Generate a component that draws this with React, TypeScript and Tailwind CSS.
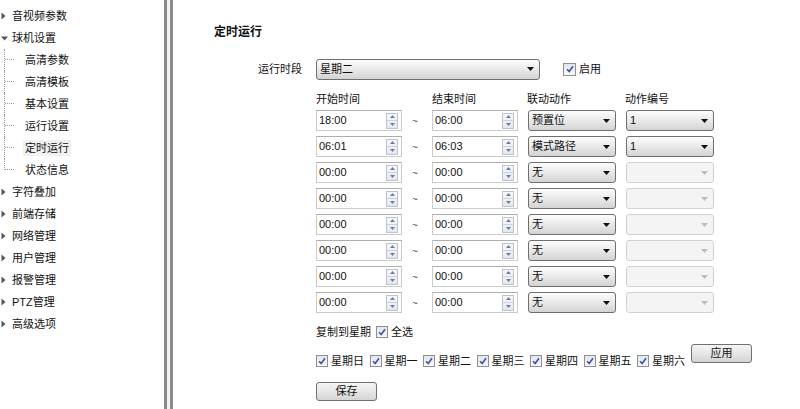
import React from "react";

const FONT = { fontFamily: '"Liberation Sans", "Noto Sans CJK SC", sans-serif' };

function TriRight() {
  return (
    <svg width="5" height="8" viewBox="0 0 5 8" className="shrink-0">
      <path d="M0.5 0.5 L4.5 4 L0.5 7.5 Z" fill="#555" />
    </svg>
  );
}
function TriDown() {
  return (
    <svg width="7" height="5" viewBox="0 0 7 5" className="shrink-0">
      <path d="M0 0.5 L7 0.5 L3.5 4.5 Z" fill="#555" />
    </svg>
  );
}

function TopItem({ label, open }: { label: string; open?: boolean }) {
  return (
    <div className="flex h-[22px] items-center pl-[1px]">
      <div className="flex w-[11px] items-center">{open ? <TriDown /> : <TriRight />}</div>
      <span className="text-[11px] text-[#111]">{label}</span>
    </div>
  );
}

function SubItem({ label, last, selected }: { label: string; last?: boolean; selected?: boolean }) {
  return (
    <div className="flex h-[22px] items-stretch pl-[4px]">
      {last ? (
        <div className="h-[11px] w-[10px] border-b border-l border-dotted border-[#9a9a9a]" />
      ) : (
        <div className="h-full w-[10px] border-l border-dotted border-[#9a9a9a]">
          <div className="h-[11px] w-full border-b border-dotted border-[#9a9a9a]" />
        </div>
      )}
      <div className="ml-[9px] flex items-center">
        <span className={`px-[2px] text-[11px] text-[#111] ${selected ? "bg-[#f1f1f1]" : ""}`}>{label}</span>
      </div>
    </div>
  );
}

function Arrow({ color }: { color: string }) {
  return (
    <svg width="7" height="4" viewBox="0 0 7 4" className="shrink-0">
      <path d="M0 0 L7 0 L3.5 4 Z" fill={color} />
    </svg>
  );
}

function Select({ text, width, disabled }: { text: string; width: string; disabled?: boolean }) {
  return (
    <div
      className={`flex h-[21px] items-center justify-between rounded-[3px] border pl-[3px] pr-[5px] ${width} ${
        disabled
          ? "border-[#d2d2d2] bg-[#f4f4f4]"
          : "border-[#6f6f6f] bg-gradient-to-b from-[#fdfdfd] via-[#e9e9e9] to-[#d3d3d3]"
      }`}
    >
      <span className="text-[11px] leading-none text-[#111]">{text}</span>
      <Arrow color={disabled ? "#bdbdbd" : "#111"} />
    </div>
  );
}

function Spin() {
  return (
    <div className="flex h-[16px] w-[12px] flex-col border border-[#bcc3cd] bg-gradient-to-b from-[#f7f8fa] to-[#e4e8ee]">
      <div className="flex flex-1 items-center justify-center border-b border-[#cdd3db]">
        <svg width="5" height="3" viewBox="0 0 5 3">
          <path d="M0 3 L5 3 L2.5 0 Z" fill="#6b7d9e" />
        </svg>
      </div>
      <div className="flex flex-1 items-center justify-center">
        <svg width="5" height="3" viewBox="0 0 5 3">
          <path d="M0 0 L5 0 L2.5 3 Z" fill="#6b7d9e" />
        </svg>
      </div>
    </div>
  );
}

function TimeInput({ value }: { value: string }) {
  return (
    <div className="flex h-[21px] w-[86px] items-center justify-between border border-[#cbcbcb] border-t-[#aeaeae] bg-white pl-[2px] pr-[3px]">
      <span className="text-[11px] leading-none text-[#111]">{value}</span>
      <Spin />
    </div>
  );
}

function Check({ size }: { size: string }) {
  return (
    <div className={`flex shrink-0 items-center justify-center border border-[#8e8f8f] bg-gradient-to-b from-[#e3e7ee] to-[#f6f7f9] ${size}`}>
      <svg width="8" height="8" viewBox="0 0 8 8">
        <path d="M1 4.2 L3.2 6.4 L7 1.2" stroke="#3f55a0" strokeWidth="1.6" fill="none" />
      </svg>
    </div>
  );
}

function Button({ label }: { label: string }) {
  return (
    <div className="flex h-[19px] w-[61px] items-center justify-center rounded-[3px] border border-[#707070] bg-gradient-to-b from-[#f4f4f4] via-[#e6e6e6] to-[#d4d4d4]">
      <span className="text-[11px] leading-none text-[#111]">{label}</span>
    </div>
  );
}

const rows = [
  { s: "18:00", e: "06:00", a: "预置位", n: "1" },
  { s: "06:01", e: "06:03", a: "模式路径", n: "1" },
  { s: "00:00", e: "00:00", a: "无", n: "" },
  { s: "00:00", e: "00:00", a: "无", n: "" },
  { s: "00:00", e: "00:00", a: "无", n: "" },
  { s: "00:00", e: "00:00", a: "无", n: "" },
  { s: "00:00", e: "00:00", a: "无", n: "" },
  { s: "00:00", e: "00:00", a: "无", n: "" },
];

const days = ["星期日", "星期一", "星期二", "星期三", "星期四", "星期五", "星期六"];

export default function App() {
  return (
    <div className="flex h-[409px] w-[800px] overflow-hidden bg-white text-[#111]" style={FONT}>
      {/* Sidebar */}
      <div className="w-[164px] shrink-0 pt-[5px]">
        <TopItem label="音视频参数" />
        <TopItem label="球机设置" open />
        <SubItem label="高清参数" />
        <SubItem label="高清模板" />
        <SubItem label="基本设置" />
        <SubItem label="运行设置" />
        <SubItem label="定时运行" selected />
        <SubItem label="状态信息" last />
        <TopItem label="字符叠加" />
        <TopItem label="前端存储" />
        <TopItem label="网络管理" />
        <TopItem label="用户管理" />
        <TopItem label="报警管理" />
        <TopItem label="PTZ管理" />
        <TopItem label="高级选项" />
      </div>

      {/* Separator bars */}
      <div className="h-full w-[3px] shrink-0 bg-[#8a8a8a]" />
      <div className="h-full w-[3px] shrink-0 bg-[#f4f4f4]" />
      <div className="h-full w-[3px] shrink-0 bg-[#8a8a8a]" />

      {/* Content */}
      <div className="flex-1 pl-[41px] pt-[24px]">
        <div className="h-[16px] text-[12px] font-bold leading-[16px]">定时运行</div>

        <div className="mt-[19px] flex h-[20px] items-center">
          <div className="w-[102px] pr-[14px] text-right text-[11px]">运行时段</div>
          <Select text="星期二" width="w-[224px]" />
          <div className="ml-[23px] flex items-center gap-[3px]">
            <Check size="h-[13px] w-[13px]" />
            <span className="text-[11px]">启用</span>
          </div>
        </div>

        <div className="ml-[102px]">
          <div className="mt-[13px] flex h-[14px] items-center text-[11px]">
            <div className="w-[116px]">开始时间</div>
            <div className="w-[95px]">结束时间</div>
            <div className="w-[98px]">联动动作</div>
            <div>动作编号</div>
          </div>

          <div className="mt-[4px] flex flex-col gap-[5px]">
            {rows.map((r, i) => (
              <div key={i} className="flex items-center">
                <TimeInput value={r.s} />
                <div className="flex w-[30px] items-center pl-[10px] pt-[2px] text-[10px] text-[#555]">~</div>
                <TimeInput value={r.e} />
                <div className="w-[10px]" />
                <Select text={r.a} width="w-[88px]" />
                <div className="w-[10px]" />
                <Select text={r.n} width="w-[88px]" disabled={r.n === ""} />
              </div>
            ))}
          </div>

          <div className="mt-[12px] flex h-[14px] items-center text-[11px]">
            <span>复制到星期</span>
            <div className="ml-[5px] flex items-center gap-[3px]">
              <Check size="h-[12px] w-[12px]" />
              <span>全选</span>
            </div>
          </div>

          <div className="mt-[5px] flex items-start">
            {days.map((d) => (
              <div key={d} className="mt-[11px] flex w-[53.5px] items-center gap-[3px]">
                <Check size="h-[12px] w-[12px]" />
                <span className="text-[11px] leading-[12px]">{d}</span>
              </div>
            ))}
            <div className="ml-[0.5px]">
              <Button label="应用" />
            </div>
          </div>

          <div className="mt-[15px]">
            <Button label="保存" />
          </div>
        </div>
      </div>
    </div>
  );
}
